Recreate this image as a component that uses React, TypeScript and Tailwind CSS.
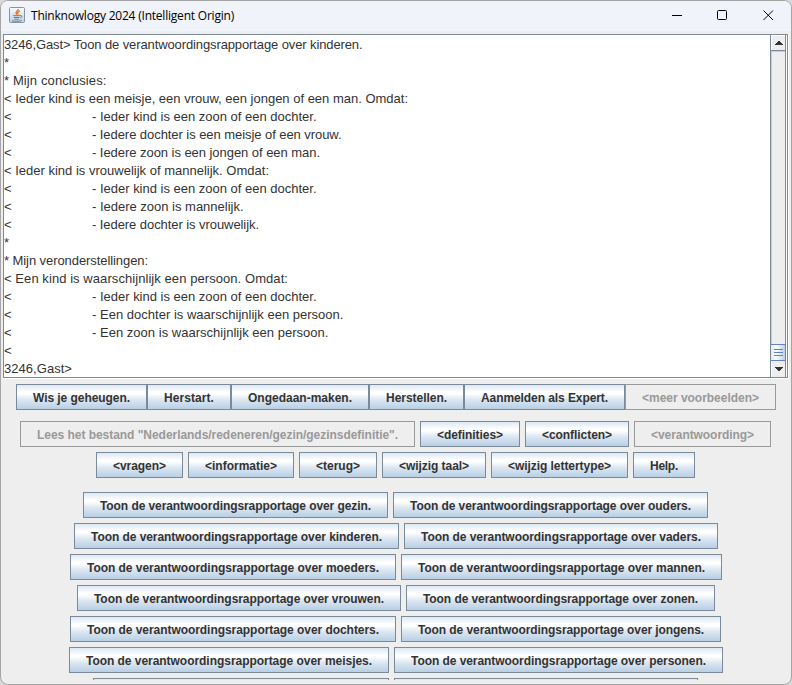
import React, { useLayoutEffect, useRef, useState } from 'react';

/** Single line of text spread over a fixed advance width. */
function FitText({ text, width }: { text: string; width: number }) {
  const ref = useRef<HTMLSpanElement>(null);
  const [spacing, setSpacing] = useState(0);
  useLayoutEffect(() => {
    const natural = ref.current!.getBoundingClientRect().width;
    setSpacing((s) => s + (width - natural) / text.length);
  }, [text, width]);
  return (
    <span ref={ref} className="inline-block whitespace-pre" style={{ letterSpacing: spacing }}>
      {text}
    </span>
  );
}

type Btn = { t: string; w: number; off?: boolean };

function SwingButton({ t, w, off }: Btn) {
  const look = off
    ? 'border-[#999999] bg-[#eeeeee] text-[#999999]'
    : 'border-[#7a8a99] bg-[linear-gradient(to_bottom,#dde8f3_0%,#ffffff_30%,#ffffff_36%,#dbe6f1_62%,#b8cfe5_100%)] text-[#333333]';
  return (
    <button
      disabled={off}
      className={`flex h-[26px] shrink-0 items-start overflow-hidden border pl-4 text-left text-xs leading-[26px] font-bold ${look}`}
      style={{ width: w }}
    >
      <FitText text={t} width={w - 34} />
    </button>
  );
}

const toolbar: Btn[] = [
  { t: 'Wis je geheugen.', w: 131 },
  { t: 'Herstart.', w: 84 },
  { t: 'Ongedaan-maken.', w: 138 },
  { t: 'Herstellen.', w: 95 },
  { t: 'Aanmelden als Expert.', w: 161 },
  { t: '<meer voorbeelden>', w: 151, off: true },
];

const menu: Btn[][] = [
  [
    { t: 'Lees het bestand "Nederlands/redeneren/gezin/gezinsdefinitie".', w: 395, off: true },
    { t: '<definities>', w: 100 },
    { t: '<conflicten>', w: 104 },
    { t: '<verantwoording>', w: 137, off: true },
  ],
  [
    { t: '<vragen>', w: 87 },
    { t: '<informatie>', w: 106 },
    { t: '<terug>', w: 78 },
    { t: '<wijzig taal>', w: 104 },
    { t: '<wijzig lettertype>', w: 137 },
    { t: 'Help.', w: 62 },
  ],
];

const P = 'Toon de verantwoordingsrapportage over ';
const reports: { x: string; row: Btn[] }[] = [
  { x: 'pl-[82px]', row: [{ t: P + 'gezin.', w: 305 }, { t: P + 'ouders.', w: 315 }] },
  { x: 'pl-[73px]', row: [{ t: P + 'kinderen.', w: 325 }, { t: P + 'vaders.', w: 314 }] },
  { x: 'pl-[69px]', row: [{ t: P + 'moeders.', w: 326 }, { t: P + 'mannen.', w: 321 }] },
  { x: 'pl-[76px]', row: [{ t: P + 'vrouwen.', w: 324 }, { t: P + 'zonen.', w: 309 }] },
  { x: 'pl-[69px]', row: [{ t: P + 'dochters.', w: 326 }, { t: P + 'jongens.', w: 320 }] },
  { x: 'pl-[68px]', row: [{ t: P + 'meisjes.', w: 320 }, { t: P + 'personen.', w: 329 }] },
  { x: 'pl-[92px]', row: [{ t: '', w: 296 }, { t: '', w: 304 }] },
];

type Line = { t: string; w: number; tab?: boolean };
const lines: Line[] = [
  { t: '3246,Gast> Toon de verantwoordingsrapportage over kinderen.', w: 358.5 },
  { t: '*', w: 5 },
  { t: '* Mijn conclusies:', w: 102.5 },
  { t: '< Ieder kind is een meisje, een vrouw, een jongen of een man. Omdat:', w: 404 },
  { t: '- Ieder kind is een zoon of een dochter.', w: 224.5, tab: true },
  { t: '- Iedere dochter is een meisje of een vrouw.', w: 249.5, tab: true },
  { t: '- Iedere zoon is een jongen of een man.', w: 228, tab: true },
  { t: '< Ieder kind is vrouwelijk of mannelijk. Omdat:', w: 265 },
  { t: '- Ieder kind is een zoon of een dochter.', w: 224.5, tab: true },
  { t: '- Iedere zoon is mannelijk.', w: 151.5, tab: true },
  { t: '- Iedere dochter is vrouwelijk.', w: 167, tab: true },
  { t: '*', w: 5 },
  { t: '* Mijn veronderstellingen:', w: 144 },
  { t: '< Een kind is waarschijnlijk een persoon. Omdat:', w: 284 },
  { t: '- Ieder kind is een zoon of een dochter.', w: 224.5, tab: true },
  { t: '- Een dochter is waarschijnlijk een persoon.', w: 251.5, tab: true },
  { t: '- Een zoon is waarschijnlijk een persoon.', w: 236.5, tab: true },
  { t: '<', w: 8 },
  { t: '3246,Gast>', w: 68 },
];

function JavaIcon() {
  return (
    <svg className="mb-0.5" width="16" height="16" viewBox="0 0 16 16" fill="none">
      <defs>
        <linearGradient id="tile" x1="0" y1="0" x2="0" y2="1">
          <stop offset="0" stopColor="#f8fafc" />
          <stop offset="1" stopColor="#c3d0da" />
        </linearGradient>
      </defs>
      <rect x=".5" y=".5" width="15" height="15" rx="1" fill="url(#tile)" stroke="#8195a6" />
      <path d="M9.200 2C9.500 4 5.400 4.700 7.600 7.700M11 3.800C8.600 4.800 8 5.800 9.200 8" stroke="#e8752e" strokeWidth="1.300" />
      <path d="M4 8.700h7M4.800 10.500h5.600M5.300 12.200h4.600M3 13.700c2 .9 8 .8 9.800-.3M11 8.600c2.600-.6 2.400 1.800.1 2.400" stroke="#5f84a0" />
    </svg>
  );
}

export default function App() {
  return (
    <div className="h-[685px] w-[792px] overflow-hidden bg-[#d9d9d9] font-['Liberation_Sans',Arial,sans-serif]">
      <div className="flex h-[685px] flex-col overflow-hidden rounded-lg border border-[#a5a5a5] bg-[#eeeeee]">
        <header className="flex h-[30px] shrink-0 items-center bg-[#f0f3f9] pl-2">
          <JavaIcon />
          <h1 className="ml-1.5 font-['Open_Sans',sans-serif] text-xs leading-[30px] text-black">
            <FitText text="Thinknowlogy 2024 (Intelligent Origin)" width={203} />
          </h1>
          <svg className="ml-auto" width="120" height="30" viewBox="671 1 120 30" fill="none" stroke="#000">
            <path d="M672 15.500h10" />
            <rect x="717.500" y="10.500" width="9" height="9" rx="1" />
            <path d="M763.500 10.500l9.500 9.500M773 10.500l-9.500 9.500" />
          </svg>
        </header>

        <main className="mt-[3px] ml-0.5 flex h-[345px] w-[786px] shrink-0 border-r border-b border-white">
          <div className="flex h-[344px] w-[785px] border border-[#7a8a99] bg-white">
            <div className="w-[766px] text-[13px] text-[#333333]">
              {lines.map((l, i) => (
                <div key={i} className="flex h-[18px] leading-[20px]">
                  {l.tab && <span className="w-[88px] shrink-0">&lt;</span>}
                  <FitText text={l.t} width={l.w} />
                </div>
              ))}
            </div>
            <div className="flex w-[16px] flex-col border-l border-[#7a8a99] bg-[#eeeeee]">
              <svg width="15" height="342" viewBox="0 0 15 342" shapeRendering="crispEdges">
                <defs>
                  <linearGradient id="thumb" x1="0" y1="0" x2="1" y2="0">
                    <stop offset="0" stopColor="#dde8f3" />
                    <stop offset=".35" stopColor="#ffffff" />
                    <stop offset="1" stopColor="#b8cfe5" />
                  </linearGradient>
                </defs>
                <path d="M0 .5h15M.5 0v15" stroke="#fff" />
                <path d="M14.500 0v342M0 15.500h15" stroke="#7a8a99" />
                <path d="M.5 16v293M0 16.500h14" stroke="#b8cfe5" />
                <path d="M7 6h2v1h1v1h1v1h1v1H4V9h1V8h1V7h1z" fill="#333" />
                <path d="M0 326h14v16H0z" fill="#eee" />
                <path d="M.5 326v16" stroke="#fff" />
                <rect x="-.5" y="309.500" width="15" height="16" fill="url(#thumb)" stroke="#6382bf" />
                <path d="M3 314.500h9M3 317.500h9M3 320.500h9" stroke="#6382bf" />
                <path d="M4 332h8v1h-1v1h-1v1H9v1H7v-1H6v-1H5v-1H4z" fill="#333" />
              </svg>
            </div>
          </div>
        </main>

        <nav className="mt-[5px] ml-[15px] flex shrink-0">
          {toolbar.map((b) => (
            <SwingButton key={b.t} {...b} />
          ))}
        </nav>
        <section className="mt-[11px] flex shrink-0 flex-col gap-[5px]">
          <div className="flex gap-[5px] pl-[19px]">
            {menu[0].map((b) => (
              <SwingButton key={b.t} {...b} />
            ))}
          </div>
          <div className="flex gap-[5px] pl-[95px]">
            {menu[1].map((b) => (
              <SwingButton key={b.t} {...b} />
            ))}
          </div>
        </section>
        <section className="mt-[14px] flex h-[188px] shrink-0 flex-col gap-[5px] overflow-hidden">
          {reports.map((r, i) => (
            <div key={i} className={`flex shrink-0 gap-[5px] ${r.x}`}>
              {r.row.map((b, j) => (
                <SwingButton key={j} {...b} />
              ))}
            </div>
          ))}
        </section>
      </div>
    </div>
  );
}
